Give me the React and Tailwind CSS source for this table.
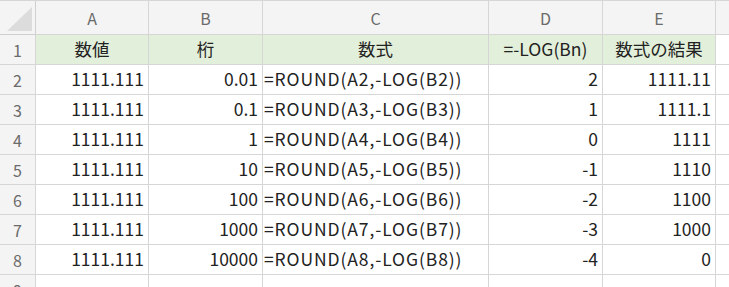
import React from 'react'

const cols = ['A', 'B', 'C', 'D', 'E']

const rows = [
    ['1111.111', '0.01', '=ROUND(A2,-LOG(B2))', '2', '1111.11'],
    ['1111.111', '0.1', '=ROUND(A3,-LOG(B3))', '1', '1111.1'],
    ['1111.111', '1', '=ROUND(A4,-LOG(B4))', '0', '1111'],
    ['1111.111', '10', '=ROUND(A5,-LOG(B5))', '-1', '1110'],
    ['1111.111', '100', '=ROUND(A6,-LOG(B6))', '-2', '1100'],
    ['1111.111', '1000', '=ROUND(A7,-LOG(B7))', '-3', '1000'],
    ['1111.111', '10000', '=ROUND(A8,-LOG(B8))', '-4', '0'],
]

const cell = 'border-r border-b border-[#d6d6d6] flex items-center'
const rowHead = 'border-r border-b border-[#d6d6d6] bg-[#f4f4f4] flex items-center justify-center text-[16px] text-[#6b6b6b]'

const App = () => {
    return (
        <div
            className="w-[729px] h-[287px] overflow-hidden bg-white text-[17.5px] text-[#222]"
            style={{ fontFamily: '"Noto Sans CJK JP", "Noto Sans", sans-serif' }}
        >
            <div className="grid grid-cols-[36px_113px_114px_226px_114px_113px_60px] grid-rows-[34px_repeat(8,30px)_30px] border-t border-[#d6d6d6]">
                {/* corner */}
                <div className="border-r border-b border-[#cfcfcf] bg-[#f4f4f4] flex items-end justify-end p-[3px]">
                    <svg width="25" height="24" viewBox="0 0 25 24">
                        <polygon points="25,0 25,24 0,24" fill="#dcdcdc" />
                    </svg>
                </div>
                {cols.map((c) => (
                    <div key={c} className="border-r border-b border-[#d6d6d6] bg-[#f4f4f4] flex items-center justify-center text-[16px] text-[#6b6b6b]">
                        {c}
                    </div>
                ))}
                <div className="border-b border-[#d6d6d6] bg-[#f4f4f4]" />

                {/* header row */}
                <div className={rowHead}>1</div>
                {['数値', '桁', '数式', '=-LOG(Bn)', '数式の結果'].map((t) => (
                    <div key={t} className={`${cell} justify-center bg-[#e2efda]`}>{t}</div>
                ))}
                <div className="border-b border-[#d6d6d6]" />

                {rows.map((r, i) => (
                    <React.Fragment key={i}>
                        <div className={rowHead}>{i + 2}</div>
                        <div className={`${cell} justify-end pr-[4px]`}>{r[0]}</div>
                        <div className={`${cell} justify-end pr-[4px]`}>{r[1]}</div>
                        <div className={`${cell} justify-start pl-[1px] tracking-[0.9px]`}>{r[2]}</div>
                        <div className={`${cell} justify-end pr-[4px]`}>{r[3]}</div>
                        <div className={`${cell} justify-end pr-[4px]`}>{r[4]}</div>
                        <div className="border-b border-[#d6d6d6]" />
                    </React.Fragment>
                ))}

                <div className={rowHead}>9</div>
                <div className={cell} />
                <div className={cell} />
                <div className={cell} />
                <div className={cell} />
                <div className={cell} />
                <div />
            </div>
        </div>
    )
}

export default App
